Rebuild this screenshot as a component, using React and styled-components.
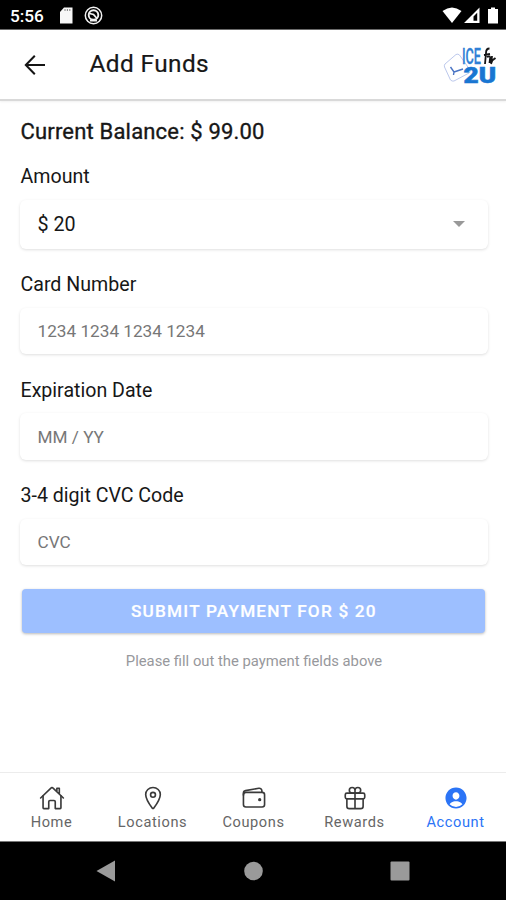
import React from 'react';
import { useState } from 'react';

import styled, { createGlobalStyle } from 'styled-components';

import {
    IoHomeOutline,
    IoLocationOutline,
    IoWalletOutline,
    IoGiftOutline,
    IoPersonCircle,
} from 'react-icons/io5';

const colors = {
    primary: '#2b74f6',
    disabled: '#9dbfff',
    text: '#171717',
    muted: '#97989c',
    tab: '#666',
    system: '#9a9a9a',
};

const GlobalStyle = createGlobalStyle`
    * {
        box-sizing: border-box;
    }

    body {
        margin: 0;
        background-color: white;
        font-family: Roboto, "Liberation Sans", sans-serif;
        color: ${colors.text};
    }
`;

const StyledScreen = styled.div`
    display: flex;
    flex-direction: column;
    width: 506px;
    height: 900px;
    overflow: hidden;
`;

const StyledStatusBar = styled.div`
    display: flex;
    align-items: center;
    flex: none;
    height: 30px;
    padding: 2px 7px 0 10px;
    background-color: black;
    border-bottom: 1px solid #6b6b6b;
    color: white;

    svg {
        display: block;
    }
`;

const StyledClock = styled.span`
    width: 49px;
    font-size: 17.2px;
    font-weight: 500;
    line-height: 20px;
`;

const StyledSystemIcons = styled.div`
    display: flex;
    align-items: center;
    gap: ${(props) => props.$gap}px;
    margin-left: ${(props) => (props.$end ? 'auto' : '0')};
`;

const StyledHeader = styled.header`
    display: flex;
    align-items: center;
    flex: none;
    height: 71px;
    padding: 0 9px 0 24px;
    border-bottom: 2px solid #d9d9d9;
    box-shadow: 0 1px 2px rgba(0, 0, 0, 0.06);
`;

const StyledBackButton = styled.button`
    width: 65.5px;
    padding: 0;
    border: none;
    background: none;
    text-align: left;

    svg {
        display: block;
    }
`;

const StyledTitle = styled.h1`
    flex: 1;
    margin: -1px 0 0;
    font-size: 24.4px;
    font-weight: 400;
    line-height: 30px;
    letter-spacing: 0.4px;
    -webkit-text-stroke: 0.2px ${colors.text};
`;

const StyledContent = styled.main`
    flex: 1;
    padding: 17px 18px 0 20px;
`;

const StyledBalance = styled.h2`
    margin: 0 0 20px 0.5px;
    font-size: 22px;
    font-weight: 400;
    line-height: 27px;
    letter-spacing: 0.18px;
    -webkit-text-stroke: 0.35px ${colors.text};
`;

const StyledField = styled.div`
    margin-bottom: 24.4px;
`;

const StyledLabel = styled.label`
    display: block;
    height: 24px;
    margin: 0 0 10.6px 0.5px;
    font-size: 19.6px;
    line-height: 24px;
`;

const StyledBox = styled.div`
    display: flex;
    align-items: center;
    justify-content: space-between;
    height: ${(props) => props.$height}px;
    padding: 0 23px 0 17.5px;
    border-radius: 6px;
    background-color: white;
    box-shadow: 0 1px 3px rgba(0, 0, 0, 0.13);
    font-size: 19.7px;
`;

const StyledInput = styled.input`
    width: 100%;
    padding: 0;
    border: none;
    outline: none;
    background: none;
    color: ${colors.text};
    font-family: inherit;
    font-size: 17.2px;

    &::placeholder {
        color: #777;
        opacity: 1;
    }
`;

const StyledSubmit = styled.button`
    display: block;
    width: 463px;
    height: 44px;
    margin: 0 0 0 2.4px;
    padding: 0;
    border: none;
    border-radius: 4px;
    background-color: ${colors.disabled};
    box-shadow: 0 1px 3px rgba(0, 0, 0, 0.28);
    color: white;
    font-family: inherit;
    font-size: 17.2px;
    font-weight: 500;
    letter-spacing: 1.2px;
    text-transform: uppercase;
    -webkit-text-stroke: 0.2px white;
`;

const StyledHint = styled.p`
    margin: 18px 0 0;
    color: ${colors.muted};
    font-size: 14.8px;
    line-height: 20px;
    text-align: center;
`;

const StyledTabBar = styled.nav`
    display: grid;
    grid-template-columns: repeat(5, 1fr);
    flex: none;
    height: 70px;
    padding-left: 1px;
    border-top: 1px solid #ececec;
    border-bottom: 1px solid #777;
`;

const StyledTab = styled.a`
    display: flex;
    flex-direction: column;
    align-items: center;
    padding-top: 12px;
    color: ${(props) => (props.$active ? colors.primary : colors.tab)};
    font-size: 14.6px;
    line-height: 20px;
    letter-spacing: 0.6px;

    svg {
        display: block;
        margin-bottom: 1px;
        color: ${(props) => (props.$active ? colors.primary : '#3a3a3a')};
    }
`;

const StyledSystemNav = styled.div`
    display: flex;
    align-items: center;
    justify-content: space-between;
    flex: none;
    height: 58px;
    padding: 0 96.5px 0 96px;
    background-color: black;
`;

const tabs = [
    { name: 'Home', Icon: IoHomeOutline },
    { name: 'Locations', Icon: IoLocationOutline },
    { name: 'Coupons', Icon: IoWalletOutline },
    { name: 'Rewards', Icon: IoGiftOutline },
    { name: 'Account', Icon: IoPersonCircle },
];

const fields = [
    { id: 'card', label: 'Card Number', placeholder: '1234 1234 1234 1234' },
    { id: 'expiration', label: 'Expiration Date', placeholder: 'MM / YY' },
    { id: 'cvc', label: '3-4 digit CVC Code', placeholder: 'CVC' },
];

function Logo() {
    return (
        <svg width="54" height="56" viewBox="0 -7 54 56">
            <g fill="white" stroke="#bcc8ec" strokeWidth="1">
                <path d="M2 20 L13 10.5 Q15 9.5 16.5 11 L27 26 Q27.5 28 26 29 L11 37 Q9 37.5 7.5 36 L1.5 23 Q1 21 2 20Z" />
            </g>
            <path
                d="M7.5 23 L11 28 L10.5 31 M11 28 L20 25"
                fill="none"
                stroke="#4a74c4"
                strokeWidth="1.4"
            />
            <text
                x="19"
                y="19.5"
                fill="#2f80d6"
                stroke="#2f80d6"
                strokeWidth="0.3"
                fontFamily="Roboto, sans-serif"
                fontSize="22"
                fontWeight="500"
                textLength="19"
                lengthAdjust="spacingAndGlyphs"
            >
                ICE
            </text>
            <path
                d="M46.5 4.5 Q43 4.5 43 9 L42 20 M41 11 L47 10 M44 13 Q48 11 47 15 L46.5 19 M49 12 L48.5 17 L52.5 14 M49.5 16 L48 20"
                fill="none"
                stroke="#151515"
                strokeWidth="1.8"
            />
            <text
                x="20.5"
                y="39"
                fill="#1976d2"
                stroke="#1976d2"
                strokeWidth="0.6"
                fontFamily="Roboto, sans-serif"
                fontSize="22"
                fontWeight="900"
                textLength="32.5"
                lengthAdjust="spacingAndGlyphs"
            >
                2U
            </text>
        </svg>
    );
}

function StatusBar() {
    return (
        <StyledStatusBar>
            <StyledClock>5:56</StyledClock>
            <StyledSystemIcons $gap={11}>
                <svg width="14" height="17" viewBox="0 0 14 17">
                    <path d="M5 0.5 H13.5 V16.5 H1 V5Z" fill="#f7f7f7" />
                    <path
                        d="M6 2.2 V3.8 M8.4 2.2 V3.8 M10.8 2.2 V3.8"
                        stroke="#666"
                        strokeWidth="1.1"
                    />
                </svg>
                <svg
                    width="19"
                    height="19"
                    viewBox="0 0 19 19"
                    fill="none"
                    stroke="#f2f2f2"
                >
                    <circle cx="9.5" cy="9.5" r="8.2" strokeWidth="1.5" />
                    <circle cx="9.5" cy="9" r="4.8" strokeWidth="1.9" />
                    <path
                        d="M5.5 7.5 L9.5 8.5 L13 12.5 M6 14.5 H13"
                        strokeWidth="1.8"
                    />
                </svg>
            </StyledSystemIcons>
            <StyledSystemIcons $gap={2} $end>
                <svg width="20" height="17" viewBox="0 0 20 17">
                    <path d="M0.5 4 Q10 -3 19.5 4 L10 16Z" fill="white" />
                </svg>
                <svg width="16" height="17" viewBox="0 0 16 17">
                    <path
                        d="M15.5 0.5 V16 H0Z M13.2 5.8 L9.5 9.5 V13.8 H13.2Z"
                        fill="white"
                        fillRule="evenodd"
                    />
                </svg>
                <svg width="17" height="17" viewBox="0 0 17 17">
                    <path
                        d="M9 0.5 H13 V2 H16 V16.5 H6 V2 H9Z"
                        fill="white"
                    />
                </svg>
            </StyledSystemIcons>
        </StyledStatusBar>
    );
}

function App() {
    const [amount] = useState(20);

    return (
        <StyledScreen>
            <GlobalStyle />
            <StatusBar />
            <StyledHeader>
                <StyledBackButton aria-label="Back">
                    <svg
                        width="22"
                        height="20"
                        viewBox="0 0 22 20"
                        fill="none"
                        stroke="#151515"
                        strokeWidth="2"
                    >
                        <path d="M10.8 0.8 L1.8 10 L10.8 19.2 M2 10 H21" />
                    </svg>
                </StyledBackButton>
                <StyledTitle>Add Funds</StyledTitle>
                <Logo />
            </StyledHeader>
            <StyledContent>
                <StyledBalance>Current Balance: $ 99.00</StyledBalance>
                <StyledField>
                    <StyledLabel>Amount</StyledLabel>
                    <StyledBox $height={49.5}>
                        <span>$ {amount}</span>
                        <svg width="12" height="6" viewBox="0 0 12 6">
                            <path d="M0 0 H12 L6 6Z" fill="#999" />
                        </svg>
                    </StyledBox>
                </StyledField>
                {fields.map((field) => (
                    <StyledField key={field.id}>
                        <StyledLabel htmlFor={field.id}>
                            {field.label}
                        </StyledLabel>
                        <StyledBox $height={46.3}>
                            <StyledInput
                                id={field.id}
                                placeholder={field.placeholder}
                            />
                        </StyledBox>
                    </StyledField>
                ))}
                <StyledSubmit>Submit payment for $ {amount}</StyledSubmit>
                <StyledHint>Please fill out the payment fields above</StyledHint>
            </StyledContent>
            <StyledTabBar>
                {tabs.map(({ name, Icon }) => (
                    <StyledTab key={name} $active={name === 'Account'}>
                        <Icon size={26} />
                        {name}
                    </StyledTab>
                ))}
            </StyledTabBar>
            <StyledSystemNav>
                <svg width="19" height="22" viewBox="0 0 19 22">
                    <path d="M19 0.5 V21.5 L0.5 11Z" fill={colors.system} />
                </svg>
                <svg width="21" height="20" viewBox="-2 0 21 20">
                    <circle cx="9.5" cy="10" r="9.3" fill={colors.system} />
                </svg>
                <svg width="20" height="20" viewBox="0 0 20 20">
                    <rect
                        x="0.5"
                        y="0.5"
                        width="19"
                        height="19"
                        rx="1"
                        fill={colors.system}
                    />
                </svg>
            </StyledSystemNav>
        </StyledScreen>
    );
}

export default App;
